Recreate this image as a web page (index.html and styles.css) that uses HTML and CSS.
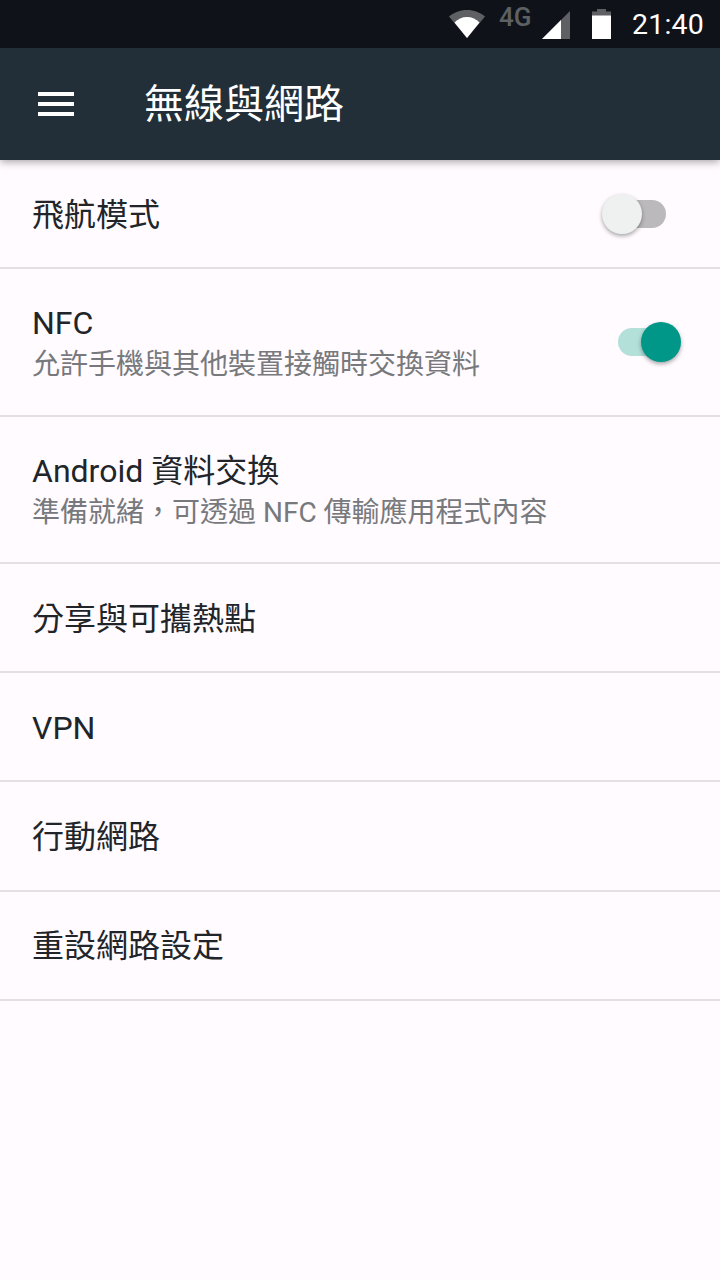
FILE: index.html
```html
<!DOCTYPE html>
<html lang="zh-Hant">
<head>
<meta charset="utf-8">
<title>無線與網路</title>
<link rel="stylesheet" href="styles.css">
</head>
<body>
<div class="status">
  <svg class="ic-wifi" width="36" height="28" viewBox="0 0 36 28"><path class="dim" d="M0 6.500C5 2.500 11 0 18 0s13 2.500 18 6.500L18 28z"/><path class="full" d="M5.500 12.500C9 9 13 7 18 7s9 2 12.500 5.500L18 28z"/></svg>
  <span class="net">4G</span>
  <svg class="ic-signal" width="28" height="28" viewBox="0 0 28 28"><path class="dim" d="M28 0v28H0z"/><path class="full" d="M19 9v19H0z"/></svg>
  <svg class="ic-batt" width="19" height="30" viewBox="0 0 19 30"><path class="dim" d="M5 0h9v2.500h5V9H0V2.500h5z"/><path class="full" d="M0 6.500h19V30H0z"/></svg>
  <span class="clock">21:40</span>
</div>
<header class="bar">
  <svg class="menu" width="36" height="24" viewBox="0 0 36 24"><path d="M0 0h36v4H0zM0 10h36v4H0zM0 20h36v4H0z"/></svg>
  <h1 class="title">無線與網路</h1>
</header>
<main class="list">
  <div class="row short">
    <div class="text"><div class="main">飛航模式</div></div>
    <div class="switch off"><span class="track"></span><span class="thumb"></span></div>
  </div>
  <div class="row tall">
    <div class="text"><div class="main">NFC</div><div class="sub">允許手機與其他裝置接觸時交換資料</div></div>
    <div class="switch on"><span class="track"></span><span class="thumb"></span></div>
  </div>
  <div class="row tall">
    <div class="text"><div class="main">Android 資料交換</div><div class="sub">準備就緒，可透過 NFC 傳輸應用程式內容</div></div>
  </div>
  <div class="row short"><div class="text"><div class="main">分享與可攜熱點</div></div></div>
  <div class="row short"><div class="text"><div class="main">VPN</div></div></div>
  <div class="row short"><div class="text"><div class="main">行動網路</div></div></div>
  <div class="row short"><div class="text"><div class="main">重設網路設定</div></div></div>
</main>
</body>
</html>
```
FILE: styles.css
```css
* { box-sizing: border-box; }
html, body { margin: 0; padding: 0; }
body {
  width: 720px;
  height: 1280px;
  overflow: hidden;
  background: #fffbff;
  font-family: Roboto, "Noto Sans CJK TC", sans-serif;
}
.status {
  height: 48px;
  background: #0f1319;
  display: flex;
  align-items: flex-start;
  color: #fff;
  position: relative;
  z-index: 1;
}
.status svg { flex: none; }
.dim { fill: #fff; opacity: .33; }
.full { fill: #fff; }
.ic-wifi { margin: 10px 0 0 449px; }
.net { margin: 3px 0 0 14px; width: 34px; font-size: 26px; line-height: 28px; font-weight: 500; color: #5e6164; }
.ic-signal { margin: 11px 0 0 9px; }
.ic-batt { margin: 9px 0 0 22px; }
.clock { margin: 7px 0 0 21px; font-size: 28.5px; line-height: 36px; font-weight: 400; letter-spacing: .2px; }
.bar {
  height: 112px;
  background: #222f39;
  display: flex;
  align-items: center;
  box-shadow: 0 2px 8px rgba(0,0,0,.35);
  position: relative;
}
.menu { fill: #fff; margin-left: 38px; flex: none; }
.title { margin: 2px 0 0 70px; font-size: 40px; line-height: 56px; font-weight: 400; color: #fff; }
.row {
  display: flex;
  align-items: center;
  justify-content: space-between;
  padding: 0 32px;
  border-bottom: 2px solid #e2e0e2;
}
.short { height: 109.2px; }
.tall { height: 147.4px; }
.tall .text { padding-top: 3px; }
.main { font-size: 32px; line-height: 40px; color: #212529; padding-top: 2px; }
.sub { font-size: 28px; line-height: 40px; color: #77797c; margin-top: 2px; }
.switch { position: relative; width: 80px; height: 40px; flex: none; margin-right: 4px; }
.track { position: absolute; left: 14px; top: 6px; width: 48px; height: 28px; border-radius: 14px; }
.thumb { position: absolute; top: 0; width: 40px; height: 40px; border-radius: 50%; box-shadow: 0 2px 4px rgba(0,0,0,.35); }
.off .track { background: #bcb9bd; }
.off .thumb { left: -2px; background: #eff0f0; }
.on .track { background: #b4e0da; }
.on .thumb { left: 37px; background: #009688; }
```
